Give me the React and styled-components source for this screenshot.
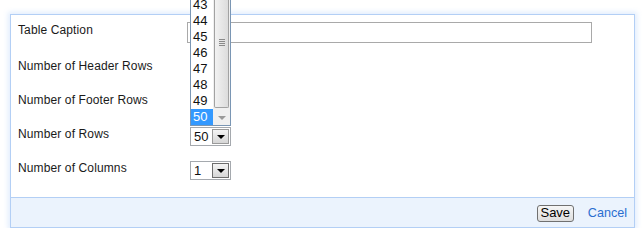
import React from "react";
import styled, { createGlobalStyle } from "styled-components";

const Global = createGlobalStyle`
  html, body { margin: 0; padding: 0; background: #fff; }
  body { font-family: "Liberation Sans", Arial, sans-serif; font-size: 12px; color: #1a1a1a; }
`;

const Page = styled.div`
  padding: 14px 10px 0 10px;
  width: 625px;
`;

const Panel = styled.div`
  border: 1px solid #b3cff5;
  box-shadow: 0 0 5px 2px rgba(190, 215, 250, 0.45);
  background: #fff;
  display: flex;
  flex-direction: column;
`;

const Body = styled.div`
  padding: 7px 0 2px 7px;
  display: flex;
  flex-direction: column;
`;

const Row = styled.div`
  display: grid;
  grid-template-columns: 169px 1fr;
  align-items: start;
  height: ${(p) => p.$h}px;
`;

const Label = styled.div`
  line-height: 14px;
  letter-spacing: 0.12px;
  padding-top: ${(p) => p.$pt || 0}px;
`;

const TextInput = styled.div`
  width: 403px;
  height: 19px;
  border: 1px solid #a9a9a9;
  background: #fff;
`;

const SelectWrap = styled.div`
  position: relative;
  margin-left: 3px;
  width: 41px;
`;

const Select = styled.div`
  box-sizing: border-box;
  width: 41px;
  height: 19px;
  border: 1px solid #a5a9ae;
  background: #fff;
  display: flex;
  align-items: stretch;
`;

const SelectValue = styled.div`
  flex: 1;
  font-size: 13px;
  line-height: 17px;
  padding-left: 3px;
  color: #111;
`;

const SelectButton = styled.div`
  box-sizing: border-box;
  width: 17px;
  margin: 1px;
  border: 1px solid ${(p) => (p.$dark ? "#6d6d6d" : "#9a9a9a")};
  background: linear-gradient(#f4f4f4, #d6d6d6);
  display: flex;
  align-items: center;
  justify-content: center;
`;

const Tri = styled.div`
  width: 0;
  height: 0;
  border-left: 4px solid transparent;
  border-right: 4px solid transparent;
  border-top: 4px solid ${(p) => p.$c || "#000"};
  margin-top: 1px;
`;

const Popup = styled.div`
  position: absolute;
  left: 0;
  bottom: 100%;
  margin-bottom: 1px;
  box-sizing: border-box;
  width: 41px;
  border: 1px solid #7a96b4;
  border-top: none;
  background: #fff;
  display: flex;
  z-index: 5;
`;

const List = styled.div`
  flex: 1;
  display: flex;
  flex-direction: column;
`;

const Item = styled.div`
  height: 16px;
  line-height: 16px;
  font-size: 13px;
  padding-left: 2px;
  color: ${(p) => (p.$sel ? "#fff" : "#111")};
  background: ${(p) => (p.$sel ? "#3399ff" : "#fff")};
`;

const Scroll = styled.div`
  width: 17px;
  display: flex;
  flex-direction: column;
  background: #f0f0f0;
`;

const Thumb = styled.div`
  flex: 1;
  margin: 0 1px 1px 1px;
  border: 1px solid #a2a2a2;
  border-top: none;
  border-radius: 0 0 2px 2px;
  background: linear-gradient(90deg, #f2f2f2, #dcdcdc);
  display: flex;
  flex-direction: column;
  justify-content: flex-start;
  align-items: center;
  padding-top: 42px;
`;

const Grip = styled.div`
  width: 6px;
  height: 1px;
  background: #8a8a8a;
  margin-bottom: 1px;
`;

const ScrollDown = styled.div`
  height: 16px;
  display: flex;
  align-items: center;
  justify-content: center;
  background: #f0f0f0;
`;

const Footer = styled.div`
  border-top: 1px solid #b3cff5;
  background: #ebf3fd;
  height: 29px;
  display: flex;
  align-items: center;
  justify-content: flex-end;
  padding-right: 7px;
  gap: 14px;
`;

const Button = styled.button`
  font-family: "Liberation Sans", Arial, sans-serif;
  font-size: 13px;
  height: 17px;
  width: 37px;
  padding: 0;
  border: 1px solid #707070;
  border-radius: 3px;
  background: linear-gradient(#f6f6f6, #dedede);
  color: #000;
  line-height: 14px;
  margin-top: 1px;
`;

const Link = styled.a`
  color: #2a6ed0;
  text-decoration: none;
  font-size: 12.6px;
`;

const items = [43, 44, 45, 46, 47, 48, 49, 50];

function Dropdown({ value, open, dark }) {
  return (
    <SelectWrap>
      {open && (
        <Popup>
          <List>
            {items.map((n) => (
              <Item key={n} $sel={n === 50}>{n}</Item>
            ))}
          </List>
          <Scroll>
            <Thumb>
              <Grip />
              <Grip />
              <Grip />
              <Grip />
            </Thumb>
            <ScrollDown>
              <Tri $c="#9a9a9a" />
            </ScrollDown>
          </Scroll>
        </Popup>
      )}
      <Select>
        <SelectValue>{value}</SelectValue>
        <SelectButton $dark={dark}>
          <Tri />
        </SelectButton>
      </Select>
    </SelectWrap>
  );
}

export default function App() {
  return (
    <>
      <Global />
      <Page>
        <Panel>
          <Body>
            <Row $h={37}>
              <Label $pt={1}>Table Caption</Label>
              <TextInput />
            </Row>
            <Row $h={34}>
              <Label>Number of Header Rows</Label>
            </Row>
            <Row $h={34}>
              <Label>Number of Footer Rows</Label>
            </Row>
            <Row $h={34}>
              <Label>Number of Rows</Label>
              <Dropdown value="50" open />
            </Row>
            <Row $h={34}>
              <Label>Number of Columns</Label>
              <Dropdown value="1" dark />
            </Row>
          </Body>
          <Footer>
            <Button>Save</Button>
            <Link href="#">Cancel</Link>
          </Footer>
        </Panel>
      </Page>
    </>
  );
}
